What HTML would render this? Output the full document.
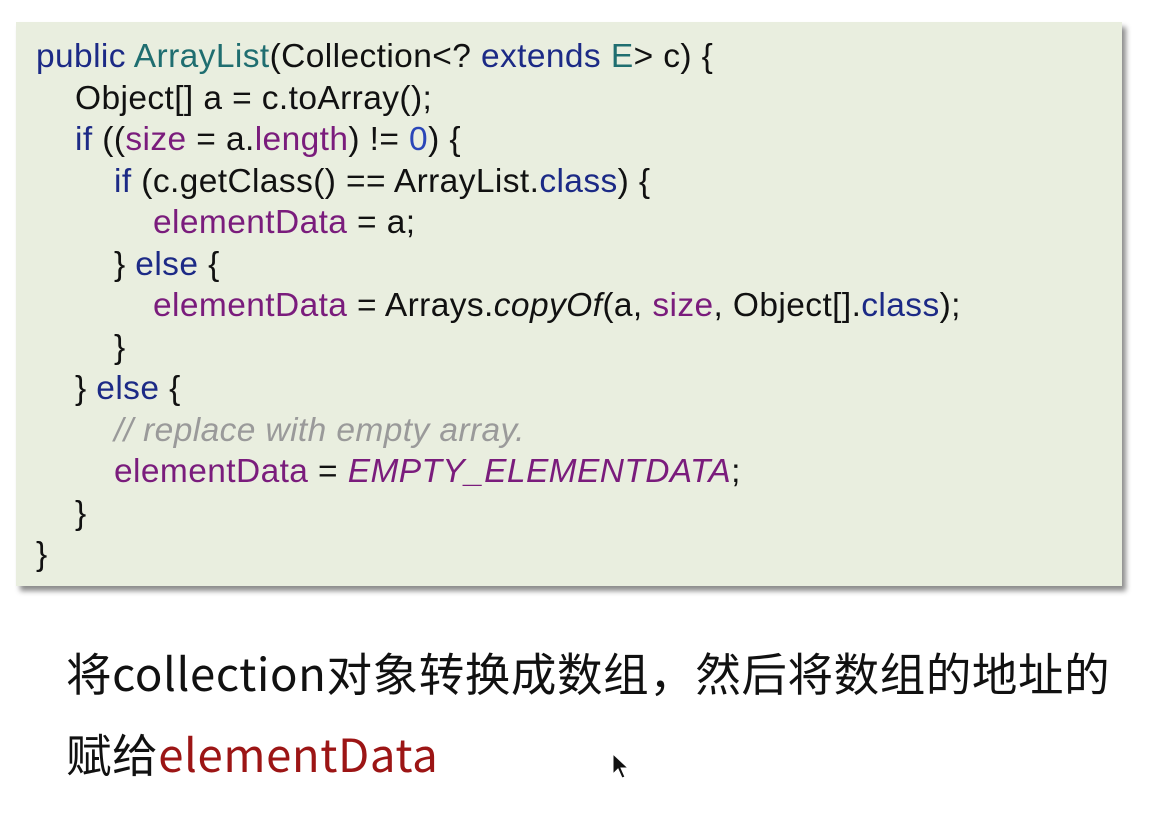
<!DOCTYPE html>
<html><head><meta charset="utf-8"><style>
html,body{margin:0;padding:0;background:#fff;width:1170px;height:813px;overflow:hidden;position:relative}
.box{position:absolute;left:16px;top:22px;width:1106px;height:564px;background:#e9eedf;box-shadow:4px 5px 5px rgba(0,0,0,0.45)}
.code{position:absolute;left:36px;top:36px;font-family:"Liberation Sans",Arial,sans-serif;font-size:33.5px;color:#111;letter-spacing:0.4px}
.code div{height:41.5px;line-height:41.5px;white-space:pre}
.l1{padding-left:39px}.l2{padding-left:78px}.l3{padding-left:117px}
.k{color:#1c2a86}.t{color:#1f6e70}.p{color:#7a1c7c}.n{color:#2a46b8}.c{color:#9a9a9a;font-style:italic}.i{font-style:italic}
.cn{position:absolute;left:66px;font-family:"Noto Sans CJK SC","WenQuanYi Zen Hei",sans-serif;font-size:45.5px;color:#111;white-space:nowrap;line-height:1;letter-spacing:0.6px}
.r{color:#9c1515}
</style></head><body>
<div class="box"></div>
<div class="code"><div><span class="k">public</span> <span class="t">ArrayList</span>(Collection&lt;? <span class="k">extends</span> <span class="t">E</span>&gt; c) {</div><div class="l1">Object[] a = c.toArray();</div><div class="l1"><span class="k">if</span> ((<span class="p">size</span> = a.<span class="p">length</span>) != <span class="n">0</span>) {</div><div class="l2"><span class="k">if</span> (c.getClass() == ArrayList.<span class="k">class</span>) {</div><div class="l3"><span class="p">elementData</span> = a;</div><div class="l2">} <span class="k">else</span> {</div><div class="l3"><span class="p">elementData</span> = Arrays.<span class="i">copyOf</span>(a, <span class="p">size</span>, Object[].<span class="k">class</span>);</div><div class="l2">}</div><div class="l1">} <span class="k">else</span> {</div><div class="l2"><span class="c">// replace with empty array.</span></div><div class="l2"><span class="p">elementData</span> = <span class="p i">EMPTY_ELEMENTDATA</span>;</div><div class="l1">}</div><div>}</div></div>
<div class="cn" style="top:650px">将collection对象转换成数组，然后将数组的地址的</div>
<div class="cn" style="top:731px">赋给<span class="r">elementData</span></div>
<svg style="position:absolute;left:612px;top:753px" width="20" height="28" viewBox="0 0 20 28"><path d="M1 1 L1 21 L6 16 L10 25 L13 24 L9 15 L16 15 Z" fill="#111" stroke="#fff" stroke-width="1"/></svg>
</body></html>
